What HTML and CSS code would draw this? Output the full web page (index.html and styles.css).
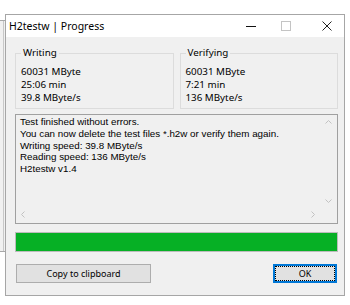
FILE: index.html
```html
<!DOCTYPE html>
<html lang="en">

<head>
    <meta charset="UTF-8">
    <title>H2testw | Progress</title>
    <link rel="stylesheet" href="styles.css">
</head>

<body>
    <div class="backdrop"></div>

    <div class="dialog">
        <div class="titlebar">
            <span class="title">H2testw | Progress</span>
            <div class="caption">
                <svg class="cap-min" width="10" height="10"><path d="M0 5.5h10" stroke="#111" /></svg>
                <svg class="cap-max" width="10" height="10"><rect x="0.5" y="0.5" width="9" height="9" fill="none" stroke="#c4c4c4" /></svg>
                <svg class="cap-close" width="10" height="10"><path d="M0.5 0.5L9.5 9.5M9.5 0.5L0.5 9.5" stroke="#222" /></svg>
            </div>
        </div>

        <div class="client">
            <div class="groups">
                <fieldset class="group">
                    <legend>Writing</legend>
                    <div>60031 MByte</div>
                    <div>25:06 min</div>
                    <div>39.8 MByte/s</div>
                </fieldset>
                <fieldset class="group">
                    <legend>Verifying</legend>
                    <div>60031 MByte</div>
                    <div>7:21 min</div>
                    <div>136 MByte/s</div>
                </fieldset>
            </div>

            <div class="log">
                <div class="log-text">
                    <div>Test finished without errors.</div>
                    <div>You can now delete the test files *.h2w or verify them again.</div>
                    <div>Writing speed: 39.8 MByte/s</div>
                    <div>Reading speed: 136 MByte/s</div>
                    <div>H2testw v1.4</div>
                </div>
                <div class="vscroll">
                    <svg width="7" height="4"><path d="M0.5 3.5L3.5 0.5L6.5 3.5" fill="none" stroke="#c2c2c2" /></svg>
                    <svg width="7" height="4"><path d="M0.5 0.5L3.5 3.5L6.5 0.5" fill="none" stroke="#c2c2c2" /></svg>
                </div>
                <div class="hscroll">
                    <svg width="4" height="7"><path d="M3.5 0.5L0.5 3.5L3.5 6.5" fill="none" stroke="#c2c2c2" /></svg>
                    <svg width="4" height="7"><path d="M0.5 0.5L3.5 3.5L0.5 6.5" fill="none" stroke="#c2c2c2" /></svg>
                </div>
                <div class="corner"></div>
            </div>

            <div class="progress">
                <div class="progress-fill"></div>
            </div>

            <div class="buttons">
                <button type="button" class="btn btn-copy">Copy to clipboard</button>
                <button type="button" class="btn btn-ok">OK</button>
            </div>
        </div>
    </div>
</body>

</html>
```

FILE: styles.css
```css
body {
    margin: 0;
    background-color: #fff;
    font-family: "Noto Sans", sans-serif;
    color: #000;
}

/* window lying behind the dialog */
.backdrop {
    position: absolute;
    left: -20px;
    top: 20px;
    width: 200px;
    height: 230px;
    border: 1px solid #a8a8a8;
    background-color: #f0f0f0;
}

.backdrop::before {
    content: "";
    position: absolute;
    left: 22px;
    top: 0;
    bottom: 0;
    border-left: 1px solid #c8c8c8;
}

.dialog {
    position: absolute;
    left: 5px;
    top: 14px;
    width: 338px;
    height: 280px;
    border: 1px solid #a6a6a6;
    background-color: #f0f0f0;
    display: flex;
    flex-direction: column;
}

/* Title bar */
.titlebar {
    height: 22px;
    background-color: #fff;
    display: flex;
    align-items: center;
    padding-left: 3px;
}

.title {
    font-size: 10.5px;
}

.caption {
    margin-left: auto;
    display: flex;
    align-items: center;
    padding-right: 12px;
}

.caption svg {
    display: block;
}

.cap-max {
    margin-left: 25px;
}

.cap-close {
    margin-left: 31px;
}

.client {
    padding: 9px 6px 0 9px;
}

/* Writing / Verifying boxes */
.groups {
    display: grid;
    grid-template-columns: 1fr 1fr;
    gap: 6px;
}

.group {
    margin: 0;
    min-width: 0;
    padding: 5px 5px 4px;
    border: 1px solid #dcdcdc;
    font-size: 9.8px;
    line-height: 13px;
}

.group legend {
    margin-left: 0;
    padding: 0 2px;
    line-height: 14px;
    font-size: 9.8px;
}

/* Result text box */
.log {
    margin-top: 5px;
    height: 108px;
    border: 1px solid #a0a0a0;
    background-color: #f0f0f0;
    display: grid;
    grid-template-columns: 1fr 17px;
    grid-template-rows: 1fr 17px;
}

.log-text {
    padding: 1px 4px 0;
    font-family: "Liberation Sans", Arial, sans-serif;
    font-size: 9.8px;
    line-height: 11.8px;
    white-space: nowrap;
    overflow: hidden;
}

.vscroll {
    display: flex;
    flex-direction: column;
    justify-content: space-between;
    align-items: center;
    padding: 5px 0 3px;
}

.hscroll {
    display: flex;
    justify-content: space-between;
    align-items: center;
    padding: 0 5px;
}

.vscroll svg,
.hscroll svg {
    display: block;
}

.progress {
    margin-top: 8px;
    height: 18px;
    border: 1px solid #bcbcbc;
    background-color: #e6e6e6;
}

.progress-fill {
    height: 100%;
    width: 100%;
    background-color: #06b025;
}

.buttons {
    margin-top: 12px;
    display: flex;
    justify-content: space-between;
    padding: 0 1px;
}

.btn {
    height: 19px;
    padding: 0;
    border: 1px solid #adadad;
    background-color: #e1e1e1;
    font-family: "Noto Sans", sans-serif;
    font-size: 9px;
    color: #000;
}

.btn-copy {
    width: 135px;
}

.btn-ok {
    width: 64px;
    border-color: #0078d7;
    box-shadow: inset 0 0 0 1px #0078d7;
    outline: 1px dotted #000;
    outline-offset: -3px;
}
```
